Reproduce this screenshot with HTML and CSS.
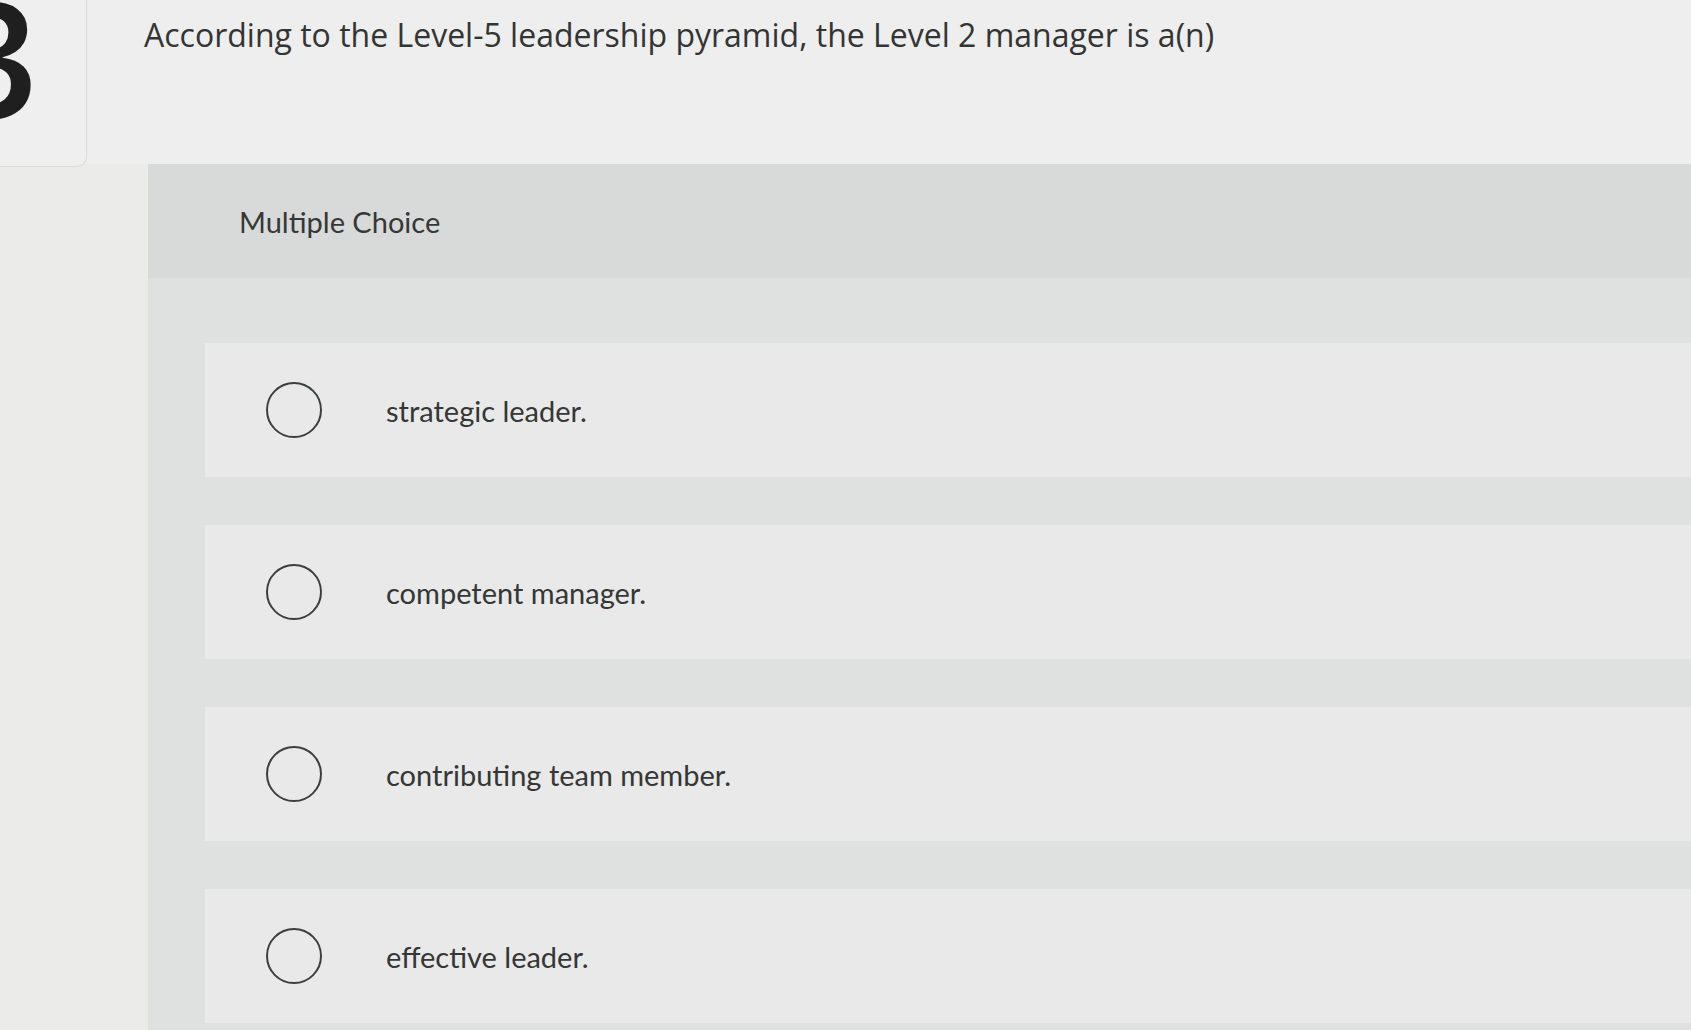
FILE: index.html
```html
<!DOCTYPE html>
<html>
<head>
<meta charset="utf-8">
<link rel="stylesheet" href="styles.css">
</head>
<body>
<div class="page">
  <div class="top">
    <div class="qnum"><span class="qnum-digit">3</span></div>
    <div class="qtext">According to the Level-5 leadership pyramid, the Level 2 manager is a(n)</div>
  </div>
  <div class="panel">
    <div class="panel-head">Multiple Choice</div>
    <div class="options">
      <div class="option"><span class="radio"></span><span class="label">strategic leader.</span></div>
      <div class="option"><span class="radio"></span><span class="label">competent manager.</span></div>
      <div class="option"><span class="radio"></span><span class="label">contributing team member.</span></div>
      <div class="option"><span class="radio"></span><span class="label">effective leader.</span></div>
    </div>
  </div>
</div>
</body>
</html>
```
FILE: styles.css
```css
html, body {
  margin: 0;
  padding: 0;
  background: #ebebea;
  height: 1030px;
  overflow: hidden;
}
.page {
  display: flex;
  flex-direction: column;
}
.top {
  display: flex;
  align-items: flex-start;
  height: 164px;
  background: #edeeed;
}
.qnum {
  width: 86px;
  height: 166px;
  flex: none;
  overflow: hidden;
  border-right: 1px solid #d9dad9;
  border-bottom: 1px solid #d9dad9;
  border-bottom-right-radius: 10px;
  background: #eeefee;
  position: relative;
  z-index: 1;
}
.qnum-digit {
  display: block;
  margin-left: -54px;
  margin-top: -26px;
  font-family: "Open Sans", sans-serif;
  font-weight: 600;
  font-size: 162px;
  line-height: 1;
  color: #1f1f1f;
}
.qtext {
  margin-left: 57px;
  padding-top: 13px;
  font-family: "Open Sans", sans-serif;
  font-size: 32px;
  color: #333434;
  white-space: nowrap;
}
.panel {
  margin-left: 148px;
  background: #dfe1e0;
  height: 866px;
}
.panel-head {
  height: 114px;
  display: flex;
  align-items: center;
  padding-left: 91px;
  background: #d8dad9;
  font-family: "Lato", sans-serif;
  font-size: 29px;
  color: #363737;
}
.options {
  display: flex;
  flex-direction: column;
  gap: 48px;
  padding-top: 65px;
  padding-left: 57px;
}
.option {
  height: 134px;
  display: flex;
  align-items: center;
  background: #e8e9e8;
  padding-left: 61px;
}
.radio {
  width: 56px;
  height: 56px;
  flex: none;
  box-sizing: border-box;
  border: 2.5px solid #3d3f3f;
  border-radius: 50%;
}
.label {
  margin-left: 64px;
  font-family: "Lato", sans-serif;
  font-size: 29px;
  color: #353636;
}
```
